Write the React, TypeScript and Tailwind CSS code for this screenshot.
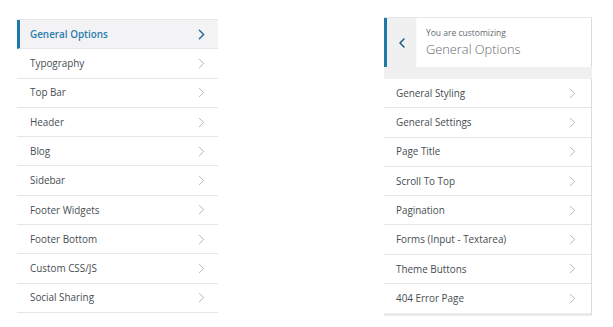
import { ChevronLeft, ChevronRight } from "lucide-react";

const leftItems = [
  "General Options",
  "Typography",
  "Top Bar",
  "Header",
  "Blog",
  "Sidebar",
  "Footer Widgets",
  "Footer Bottom",
  "Custom CSS/JS",
  "Social Sharing",
];

const rightItems = [
  "General Styling",
  "General Settings",
  "Page Title",
  "Scroll To Top",
  "Pagination",
  "Forms (Input - Textarea)",
  "Theme Buttons",
  "404 Error Page",
];

function Row({ label, active }: { label: string; active?: boolean }) {
  return (
    <div
      className={
        "flex h-[29.3px] items-center justify-between border-b border-[#e6e6e8] pr-[8px] " +
        (active
          ? "border-l-[3px] border-l-[#1b7aa8] bg-[#f3f3f5] pl-[10px] text-[#2a7cac]"
          : "pl-[13px] text-[#474d53]")
      }
    >
      <span className={active ? "font-semibold" : "font-medium"}>{label}</span>
      <ChevronRight
        size={17}
        strokeWidth={active ? 2.2 : 1.2}
        className={active ? "text-[#2a6d96]" : "text-[#a7aaad]"}
      />
    </div>
  );
}

export default function App() {
  return (
    <div className="flex h-[327px] w-[613px] bg-white pt-[17px] text-[9.9px] font-['Open_Sans',sans-serif]">
      <div className="ml-[17px] mt-[2px] w-[201px] border-t border-[#e6e6e8]">
        {leftItems.map((l, i) => (
          <Row key={l} label={l} active={i === 0} />
        ))}
      </div>

      <div className="ml-auto mr-[21px] w-[208px]">
        <div className="flex h-[50px] border-t border-[#e6e6e8] border-r border-r-[#dcdcde] bg-white">
          <div className="flex w-[33px] items-center justify-center border-l-[3px] border-[#1b7aa8] bg-[#f0f0f1] border-r border-r-[#fafafa]">
            <ChevronLeft size={16} strokeWidth={2.4} className="text-[#1d5f86]" />
          </div>
          <div className="flex flex-col justify-center pl-[9px] pt-[1px]">
            <span className="text-[8.5px] leading-[12px] text-[#646970]">You are customizing</span>
            <span className="text-[12.8px] font-light leading-[20px] text-[#646970]">General Options</span>
          </div>
        </div>
        <div className="h-[12px] bg-[#f0f0f1]" />
        <div className="border-r border-[#dcdcde] border-b-[3px] border-b-[#ebebeb]">
          {rightItems.map((l) => (
            <div
              key={l}
              className="flex h-[29.3px] items-center justify-between border-b border-[#e6e6e8] pl-[12px] pr-[10px] font-medium text-[#474d53] last:border-b-0"
            >
              <span>{l}</span>
              <ChevronRight size={17} strokeWidth={1.2} className="text-[#a7aaad]" />
            </div>
          ))}
        </div>
      </div>
    </div>
  );
}
